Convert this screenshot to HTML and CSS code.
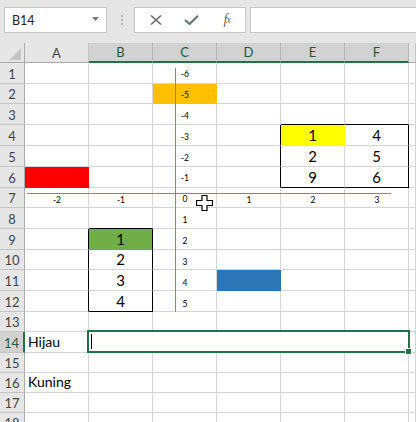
FILE: index.html
```html
<!DOCTYPE html>
<html lang="id">
<head>
  <meta charset="UTF-8" />
  <title>Book1 - Excel</title>
  <link rel="stylesheet" href="styles.css">
</head>
<body>
  <!-- name box + formula bar -->
  <div class="formula-bar">
    <div class="name-box">
      <span>B14</span>
      <svg class="drop" width="7" height="4" viewBox="0 0 7 4"><path d="M0 0h7L3.5 4z" fill="#7a7a7a"/></svg>
    </div>
    <div class="grip">
      <svg width="2" height="10" viewBox="0 0 2 10"><rect y="0" width="2" height="2" fill="#b4b4b4"/><rect y="4" width="2" height="2" fill="#b4b4b4"/><rect y="8" width="2" height="2" fill="#b4b4b4"/></svg>
    </div>
    <div class="fx-buttons">
      <span class="fx-btn">
        <svg width="12" height="10" viewBox="0 0 12 10"><path d="M1 0.5l10 9M11 0.5l-10 9" stroke="#6e6e6e" stroke-width="1.6" fill="none"/></svg>
      </span>
      <span class="fx-btn">
        <svg width="15" height="10" viewBox="0 0 15 10"><path d="M1 5l4.5 4L14 0.8" stroke="#5f7877" stroke-width="2.2" fill="none"/></svg>
      </span>
      <span class="fx-btn fx-label"><i>f</i><sub>x</sub></span>
    </div>
    <div class="formula-input"></div>
  </div>

  <div class="sheet">
    <!-- column headers -->
    <div class="corner"><svg width="12" height="12" viewBox="0 0 12 12"><path d="M12 0v12H0z" fill="#c5c5c5"/></svg></div>
    <div class="ch">A</div>
    <div class="ch sel">B</div>
    <div class="ch sel">C</div>
    <div class="ch sel">D</div>
    <div class="ch sel">E</div>
    <div class="ch sel">F</div>
    <div class="ch"></div>

    <div class="rh">1</div><div class="c"></div><div class="c"></div><div class="c"></div><div class="c"></div><div class="c"></div><div class="c"></div><div class="c"></div>
    <div class="rh">2</div><div class="c"></div><div class="c"></div><div class="c orange"></div><div class="c"></div><div class="c"></div><div class="c"></div><div class="c"></div>
    <div class="rh">3</div><div class="c"></div><div class="c"></div><div class="c"></div><div class="c"></div><div class="c bk-b"></div><div class="c bk-b"></div><div class="c"></div>
    <div class="rh">4</div><div class="c"></div><div class="c"></div><div class="c"></div><div class="c bk-r"></div><div class="c num yellow">1</div><div class="c num bk-r">4</div><div class="c"></div>
    <div class="rh">5</div><div class="c"></div><div class="c"></div><div class="c"></div><div class="c bk-r"></div><div class="c num">2</div><div class="c num bk-r">5</div><div class="c"></div>
    <div class="rh">6</div><div class="c red"></div><div class="c"></div><div class="c"></div><div class="c bk-r"></div><div class="c num bk-b">9</div><div class="c num bk-r bk-b">6</div><div class="c"></div>
    <div class="rh">7</div><div class="c"></div><div class="c"></div><div class="c"></div><div class="c"></div><div class="c"></div><div class="c"></div><div class="c"></div>
    <div class="rh">8</div><div class="c"></div><div class="c bk-b"></div><div class="c"></div><div class="c"></div><div class="c"></div><div class="c"></div><div class="c"></div>
    <div class="rh">9</div><div class="c bk-r"></div><div class="c num green bk-r">1</div><div class="c"></div><div class="c"></div><div class="c"></div><div class="c"></div><div class="c"></div>
    <div class="rh">10</div><div class="c bk-r"></div><div class="c num bk-r">2</div><div class="c"></div><div class="c"></div><div class="c"></div><div class="c"></div><div class="c"></div>
    <div class="rh">11</div><div class="c bk-r"></div><div class="c num bk-r">3</div><div class="c"></div><div class="c blue"></div><div class="c"></div><div class="c"></div><div class="c"></div>
    <div class="rh">12</div><div class="c bk-r"></div><div class="c num bk-r bk-b">4</div><div class="c"></div><div class="c"></div><div class="c"></div><div class="c"></div><div class="c"></div>
    <div class="rh">13</div><div class="c"></div><div class="c"></div><div class="c"></div><div class="c"></div><div class="c"></div><div class="c"></div><div class="c"></div>
    <div class="rh sel">14</div><div class="c">Hijau</div><div class="c merged"></div><div class="c"></div>
    <div class="rh">15</div><div class="c"></div><div class="c"></div><div class="c"></div><div class="c"></div><div class="c"></div><div class="c"></div><div class="c"></div>
    <div class="rh">16</div><div class="c">Kuning</div><div class="c"></div><div class="c"></div><div class="c"></div><div class="c"></div><div class="c"></div><div class="c"></div>
    <div class="rh">17</div><div class="c"></div><div class="c"></div><div class="c"></div><div class="c"></div><div class="c"></div><div class="c"></div><div class="c"></div>
    <div class="rh">18</div><div class="c"></div><div class="c"></div><div class="c"></div><div class="c"></div><div class="c"></div><div class="c"></div><div class="c"></div>
  </div>

  <!-- chart axes drawn over the grid -->
  <div class="axis axis-y"></div>
  <div class="axis axis-x"></div>
  <div class="y-labels">
    <span>-6</span><span>-5</span><span>-4</span><span>-3</span><span>-2</span><span>-1</span>
    <span>0</span><span>1</span><span>2</span><span>3</span><span>4</span><span>5</span>
  </div>
  <div class="x-labels">
    <span>-2</span><span>-1</span><span></span><span>1</span><span>2</span><span>3</span>
  </div>

  <!-- active selection -->
  <div class="selection"></div>
  <div class="fill-handle"></div>
  <div class="caret"></div>

  <svg class="pointer" width="17" height="16" viewBox="0 0 17 16">
    <path d="M6 0.5h5v5h5.5v5H11v5H6v-5H0.5v-5H6z" fill="#fff" stroke="#000" stroke-width="1.2" stroke-linejoin="round"/>
  </svg>
</body>
</html>
```

FILE: styles.css
```css
:root {
  --chrome-bg: #e6e6e6;
  --header-sel: #d2d2d2;
  --grid-line: #d4d4d4;
  --header-line: #ababab;
  --excel-green: #217346;
  --axis-blue: #5f8fc9;
}

* {
  margin: 0;
  padding: 0;
  box-sizing: border-box;
}

body {
  width: 416px;
  height: 422px;
  overflow: hidden;
  position: relative;
  background: var(--chrome-bg);
  font-family: Lato, 'Liberation Sans', sans-serif;
  color: #000;
}

/* formula bar */
.formula-bar {
  height: 43px;
  display: flex;
  align-items: flex-start;
  padding: 7px 0 0 4px;
}

.name-box {
  width: 103px;
  height: 26px;
  background: #fff;
  border: 1px solid #c6c6c6;
  display: flex;
  align-items: center;
  justify-content: space-between;
  padding: 0 7px 0 7px;
  font-size: 12.5px;
  color: #222;
}

.name-box .drop {
  margin-top: -2px;
}

.grip {
  width: 27px;
  height: 26px;
  display: flex;
  align-items: center;
  padding-left: 14px;
}

.fx-buttons {
  width: 112px;
  height: 26px;
  background: #fff;
  border: 1px solid #c6c6c6;
  display: flex;
  align-items: center;
  padding-left: 3px;
}

.fx-btn {
  width: 36px;
  display: flex;
  justify-content: center;
  align-items: center;
}

.fx-label {
  font-family: 'Liberation Serif', serif;
  color: #666;
  font-size: 14px;
  line-height: 1;
}

.fx-label sub {
  font-size: 10px;
  font-style: italic;
  vertical-align: -1px;
  margin-left: -1px;
}

.formula-input {
  flex: 1;
  height: 26px;
  margin-left: 4px;
  background: #fff;
  border: 1px solid #c6c6c6;
  border-right: none;
}

/* grid */
.sheet {
  display: grid;
  grid-template-columns: 25px repeat(6, 64px) 1fr;
  grid-template-rows: 20px 21px 20px 21px 21px 21px 21px 20px 21px 21px 20px 21px 21px 20px 21px 20px 20px 20px 20px;
  background: #fff;
}

.corner {
  background: var(--chrome-bg);
  border-right: 1px solid var(--header-line);
  border-bottom: 1px solid var(--header-line);
  padding: 5px 0 0 9px;
}

.corner svg {
  display: block;
}

.ch {
  background: var(--chrome-bg);
  border-right: 1px solid #c4c4c4;
  border-bottom: 1px solid var(--header-line);
  font-size: 13px;
  color: #444;
  display: flex;
  align-items: center;
  justify-content: center;
}

.ch.sel {
  background: var(--header-sel);
  border-right-color: #b4b4b4;
  border-bottom: 2px solid var(--excel-green);
  color: #1d5b39;
}

.rh {
  background: var(--chrome-bg);
  border-right: 1px solid var(--header-line);
  border-bottom: 1px solid #c4c4c4;
  font-size: 13px;
  color: #444;
  display: flex;
  align-items: center;
  justify-content: center;
  padding-top: 1px;
}

.rh.sel {
  background: var(--header-sel);
  border-right: 2px solid var(--excel-green);
  color: #1d5b39;
}

.c {
  border-right: 1px solid var(--grid-line);
  border-bottom: 1px solid var(--grid-line);
  display: flex;
  align-items: flex-end;
  padding: 0 3px 2px;
  font-size: 14px;
  line-height: 16px;
  white-space: nowrap;
}

.num {
  justify-content: center;
  font-size: 15px;
}

.merged {
  grid-column: span 5;
}

.orange { background: #ffc000; border-color: #ffc000; }
.red { background: #ff0000; border-color: #ff0000; }
.yellow { background: #ffff00; border-color: #ffff00; }
.green { background: #70ad47; border-color: #70ad47; }
.blue { background: #2e75b6; border-color: #2e75b6; }

.bk-r { border-right-color: #000; }
.bk-b { border-bottom-color: #000; }

/* chart axes */
.axis {
  position: absolute;
  background: var(--axis-blue);
}

.axis-y {
  left: 175px;
  top: 68px;
  width: 1px;
  height: 244px;
}

.axis-x {
  left: 27px;
  top: 193px;
  width: 364px;
  height: 1px;
}

.y-labels {
  position: absolute;
  left: 177px;
  top: 64px;
  width: 16px;
  display: flex;
  flex-direction: column;
}

.y-labels span,
.x-labels span {
  height: 20.88px;
  line-height: 20.88px;
  text-align: center;
  font-size: 8.5px;
}

.x-labels {
  position: absolute;
  left: 25px;
  top: 189.5px;
  display: flex;
}

.x-labels span {
  width: 64px;
}

/* selection */
.selection {
  position: absolute;
  left: 87px;
  top: 330px;
  width: 323px;
  height: 23px;
  border: 2px solid var(--excel-green);
}

.fill-handle {
  position: absolute;
  left: 405px;
  top: 348px;
  width: 7px;
  height: 7px;
  background: var(--excel-green);
  border: 1px solid #fff;
}

.caret {
  position: absolute;
  left: 91px;
  top: 334px;
  width: 1px;
  height: 15px;
  background: #000;
}

.pointer {
  position: absolute;
  left: 196px;
  top: 195px;
}
```
